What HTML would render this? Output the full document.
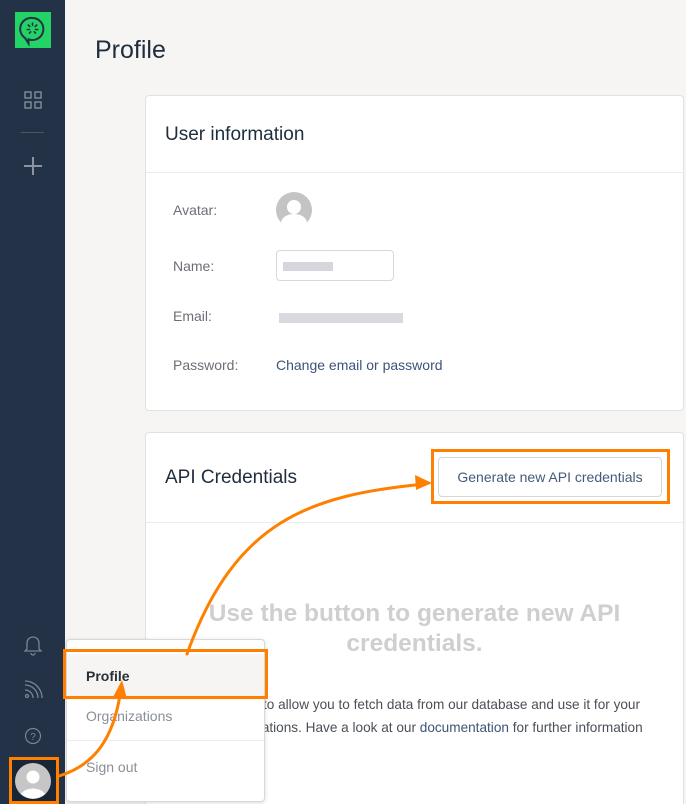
<!DOCTYPE html>
<html style="height:804px;overflow:hidden"><head><meta charset="utf-8"><style>
*{box-sizing:border-box;margin:0;padding:0}
body{width:686px;height:804px;overflow:hidden;background:#f6f5f4;font-family:"Liberation Sans",sans-serif;position:relative}
.side{position:absolute;left:0;top:0;width:65px;height:804px;background:#233246}
.abs{position:absolute}
.card{position:absolute;left:145px;width:539px;background:#fff;border:1px solid #e3e1de;border-radius:4px}
.lbl{position:absolute;left:27px;font-size:14px;color:#6b6f76}
h1{position:absolute;left:95px;top:36px;font-size:25px;font-weight:normal;color:#1f2d3d}
.ct{position:absolute;left:19px;font-size:19px;color:#1f2d3d}
</style></head><body>
<div class="side">
  <div class="abs" style="left:15px;top:12px;width:36px;height:36px;background:#24d366"></div>
  <svg class="abs" style="left:15px;top:12px" width="36" height="36" viewBox="0 0 36 36"><path d="M17.5 6a11 11 0 1 1-4 21.3v4.2l-3.5-5.5A11 11 0 0 1 17.5 6z" fill="none" stroke="#233246" stroke-width="2"/><g stroke="#233246" stroke-width="1.6" stroke-linecap="round"><path d="M17.5 11v2.3M13.3 13l1.5 1.5M21.7 13l-1.5 1.5M12.3 17.5h2.2M20.5 17.5h2.2M14.5 21l1.2-1.2M20.5 21l-1.2-1.2"/></g></svg>
  <svg class="abs" style="left:24px;top:91px" width="18" height="18"><g fill="none" stroke="#8a94a3" stroke-width="1.3"><rect x="1" y="1" width="6" height="6"/><rect x="11" y="1" width="6" height="6"/><rect x="1" y="11" width="6" height="6"/><rect x="11" y="11" width="6" height="6"/></g></svg>
  <div class="abs" style="left:21px;top:132px;width:23px;height:1px;background:#4a5567"></div>
  <svg class="abs" style="left:23px;top:156px" width="20" height="20"><path d="M10 1v18M1 10h18" stroke="#8a94a3" stroke-width="2"/></svg>
  <svg class="abs" style="left:23px;top:634px" width="20" height="22"><path d="M4 15V9a6 6 0 0 1 12 0v6l2 2H2zM8 19a2 2 0 0 0 4 0" fill="none" stroke="#7a8494" stroke-width="1.3"/></svg>
  <svg class="abs" style="left:23px;top:680px" width="20" height="20"><g fill="none" stroke="#7a8494" stroke-width="1.3"><circle cx="4" cy="16" r="1.5"/><path d="M2 10a8 8 0 0 1 8 8M2 5a13 13 0 0 1 13 13M2 1a17 17 0 0 1 17 17"/></g></svg>
  <svg class="abs" style="left:24px;top:727px" width="18" height="18"><circle cx="9" cy="9" r="7.5" fill="none" stroke="#7a8494" stroke-width="1.2"/><text x="9" y="13" font-size="10" text-anchor="middle" fill="#7a8494" font-family="Liberation Sans">?</text></svg>
</div>
<div class="abs" style="left:9px;top:757px;width:50px;height:47px;border:3px solid #ff8000;background:#1a2636"></div>
<svg class="abs" style="left:15px;top:763px" width="36" height="36"><circle cx="18" cy="18" r="18" fill="#c6c6c6"/><circle cx="18" cy="14" r="6.5" fill="#fff"/><path d="M6 31a13 9 0 0 1 24 0 18 18 0 0 1-24 0z" fill="#fff"/></svg>

<h1>Profile</h1>
<div class="card" style="top:95px;height:316px">
  <div class="ct" style="top:28px">User information</div>
  <div class="abs" style="left:0;right:0;top:76px;height:1px;background:#ececec"></div>
  <div class="lbl" style="top:106px">Avatar:</div>
  <svg class="abs" style="left:130px;top:96px" width="36" height="36"><circle cx="18" cy="18" r="18" fill="#c4c4c4"/><circle cx="18" cy="15" r="7" fill="#fff"/><path d="M5 31a13 9 0 0 1 26 0 18 18 0 0 1-26 0z" fill="#fff"/></svg>
  <div class="lbl" style="top:162px">Name:</div>
  <div class="abs" style="left:130px;top:154px;width:118px;height:31px;border:1px solid #d8d8d8;border-radius:4px"></div>
  <div class="abs" style="left:137px;top:166px;width:50px;height:9px;background:#d6d6dc"></div>
  <div class="lbl" style="top:212px">Email:</div>
  <div class="abs" style="left:133px;top:217px;width:124px;height:10px;background:#dcd8e0"></div>
  <div class="lbl" style="top:261px">Password:</div>
  <div class="abs" style="left:130px;top:261px;font-size:14px;color:#3c5478">Change email or password</div>
</div>
<div class="card" style="top:432px;height:380px">
  <div class="ct" style="top:34px">API Credentials</div>
  <div class="abs" style="left:0;right:0;top:89px;height:1px;background:#ececec"></div>
  <div class="abs" style="left:292px;top:24px;width:224px;height:40px;border:1px solid #d6d6d6;border-radius:4px;font-size:14px;color:#455a7a;text-align:center;line-height:38px">Generate new API credentials</div>
  <div class="abs" style="left:0;right:0;top:166px;text-align:center;font-size:24.5px;font-weight:bold;color:#cfcfcf;line-height:30px">Use the button to generate new API<br>credentials.</div>
  <div class="abs" style="left:0;right:0;top:260px;text-align:center;font-size:13.6px;color:#4a4f57;line-height:23px;padding-left:40px">them to allow you to fetch data from our database and use it for your<br>applications. Have a look at our <span style="color:#3c5478">documentation</span> for further information</div>
</div>
<div class="abs" style="left:431px;top:449px;width:239px;height:55px;border:3px solid #ff8000"></div>

<div class="abs" style="left:66px;top:639px;width:199px;height:163px;background:#fff;border:1px solid #d8d8d8;border-radius:4px;box-shadow:0 1px 4px rgba(0,0,0,.15)">
  <div class="abs" style="left:0;right:0;top:14px;height:46px;background:#f6f5f4"></div>
  <div class="abs" style="left:19px;top:28px;font-size:14px;font-weight:bold;color:#2a2f36">Profile</div>
  <div class="abs" style="left:19px;top:68px;font-size:14px;color:#8a8f96">Organizations</div>
  <div class="abs" style="left:0;right:0;top:100px;height:1px;background:#ececec"></div>
  <div class="abs" style="left:19px;top:119px;font-size:14px;color:#8a8f96">Sign out</div>
</div>
<div class="abs" style="left:63px;top:649px;width:205px;height:50px;border:3px solid #ff8000"></div>

<svg class="abs" style="left:0;top:0" width="686" height="804"><g fill="none" stroke="#ff8000" stroke-width="3" stroke-linecap="round"><path d="M59 776C95 765 113 738 120 695"/><path d="M187 654C235 520 310 495 425 484"/></g><g fill="#ff8000"><path d="M122 680l-9 17 14 2z"/><path d="M432 483l-17-8 1 15z"/></g></svg>
</body></html>
